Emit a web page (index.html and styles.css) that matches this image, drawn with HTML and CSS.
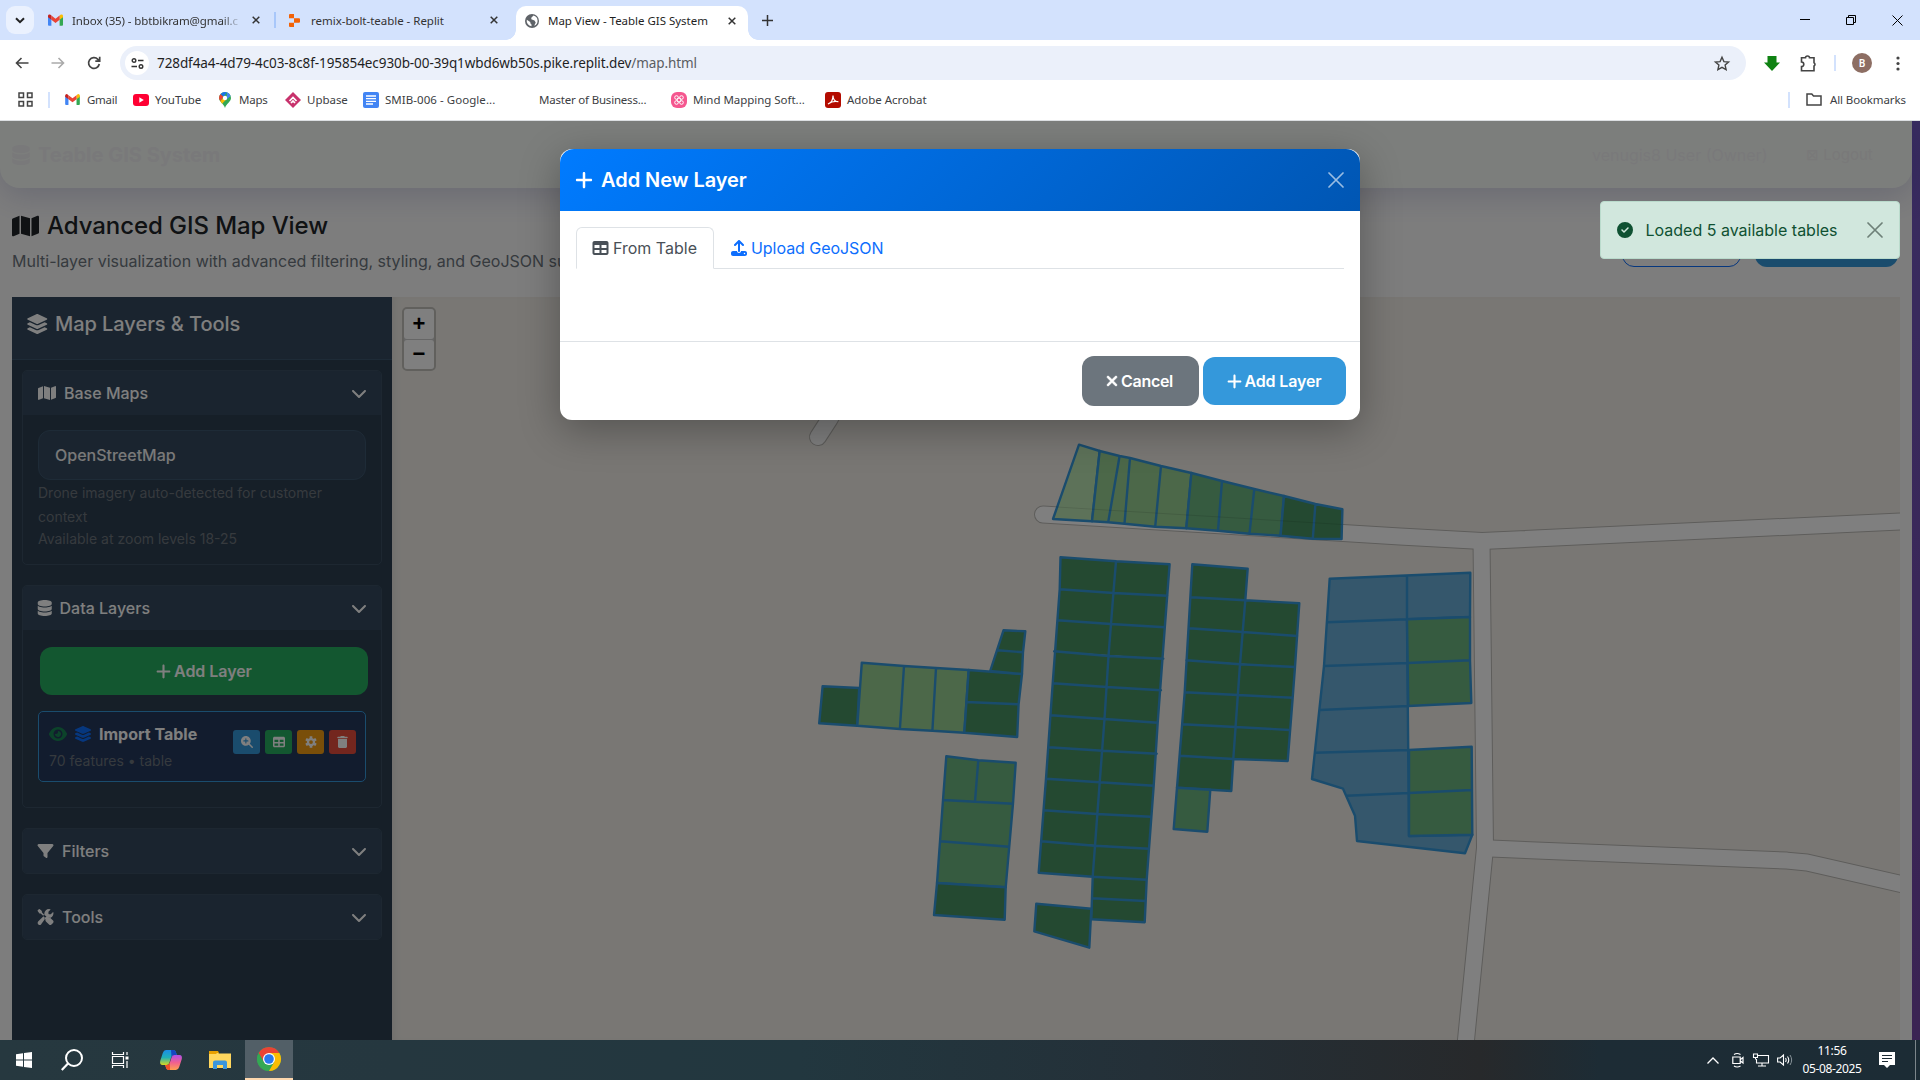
FILE: index.html
```html
<!DOCTYPE html>
<html lang="en">
<head>
<meta charset="utf-8">
<title>Map View - Teable GIS System</title>
<link rel="stylesheet" href="styles.css">
</head>
<body>
<svg class="sprite" aria-hidden="true">
  <symbol id="map" viewBox="0 0 576 512"><path d="M384 476.1L192 421.2V35.9L384 90.8V476.1zm32-1.2V88.4L543.1 37.5c15.8-6.3 32.9 5.3 32.9 22.3V394.6c0 9.8-6 18.6-15.1 22.3L416 474.8zM15.1 95.1L160 37.2V423.6L32.9 474.5C17.1 480.8 0 469.2 0 452.2V117.4c0-9.8 6-18.6 15.1-22.3z"/></symbol>
  <symbol id="layers" viewBox="0 0 576 512"><path d="M264.5 5.2c14.9-6.9 32.1-6.9 47 0l218.6 101c8.5 3.9 13.9 12.4 13.9 21.8s-5.4 17.9-13.9 21.8l-218.6 101c-14.9 6.9-32.1 6.9-47 0L45.9 149.8C37.4 145.8 32 137.3 32 128s5.4-17.9 13.9-21.8L264.5 5.2zM476.9 209.6l53.2 24.6c8.5 3.9 13.9 12.4 13.9 21.8s-5.4 17.9-13.9 21.8l-218.6 101c-14.9 6.9-32.1 6.9-47 0L45.9 277.8C37.4 273.8 32 265.3 32 256s5.4-17.9 13.9-21.8l53.2-24.6 152 70.2c23.4 10.8 50.4 10.8 73.8 0l152-70.2zm-152 198.2l152-70.2 53.2 24.6c8.5 3.9 13.9 12.4 13.9 21.8s-5.4 17.9-13.9 21.8l-218.6 101c-14.9 6.9-32.1 6.9-47 0L45.9 405.8C37.4 401.8 32 393.3 32 384s5.4-17.9 13.9-21.8l53.2-24.6 152 70.2c23.4 10.8 50.4 10.8 73.8 0z"/></symbol>
  <symbol id="plus" viewBox="0 0 448 512"><path d="M256 80c0-17.7-14.3-32-32-32s-32 14.3-32 32V224H48c-17.7 0-32 14.3-32 32s14.3 32 32 32H192V432c0 17.7 14.3 32 32 32s32-14.3 32-32V288H400c17.7 0 32-14.3 32-32s-14.3-32-32-32H256V80z"/></symbol>
  <symbol id="table" viewBox="0 0 512 512"><path d="M64 256V160H224v96H64zm0 64H224v96H64V320zm224 96V320H448v96H288zM448 256H288V160H448v96zM64 32C28.7 32 0 60.7 0 96V416c0 35.3 28.7 64 64 64H448c35.3 0 64-28.7 64-64V96c0-35.3-28.7-64-64-64H64z"/></symbol>
  <symbol id="upload" viewBox="0 0 512 512"><path d="M288 109.3V352c0 17.7-14.3 32-32 32s-32-14.3-32-32V109.3l-73.4 73.4c-12.5 12.5-32.8 12.5-45.3 0s-12.5-32.8 0-45.3l128-128c12.5-12.5 32.8-12.5 45.3 0l128 128c12.5 12.5 12.5 32.8 0 45.3s-32.8 12.5-45.3 0L288 109.3zM64 352H192c0 35.3 28.7 64 64 64s64-28.7 64-64H448c35.3 0 64 28.7 64 64v32c0 35.3-28.7 64-64 64H64c-35.3 0-64-28.7-64-64V416c0-35.3 28.7-64 64-64zM432 456a24 24 0 1 0 0-48 24 24 0 1 0 0 48z"/></symbol>
  <symbol id="database" viewBox="0 0 448 512"><path d="M448 80v48c0 44.2-100.3 80-224 80S0 172.2 0 128V80C0 35.8 100.3 0 224 0S448 35.8 448 80zM393.2 214.7c20.8-7.4 39.9-16.9 54.8-28.6V288c0 44.2-100.3 80-224 80S0 332.2 0 288V186.1c14.9 11.8 34 21.2 54.8 28.6C99.7 230.7 159.5 240 224 240s124.3-9.3 169.2-25.3zM0 346.1c14.9 11.8 34 21.2 54.8 28.6C99.7 390.7 159.5 400 224 400s124.3-9.3 169.2-25.3c20.8-7.4 39.9-16.9 54.8-28.6V432c0 44.2-100.3 80-224 80S0 476.2 0 432V346.1z"/></symbol>
  <symbol id="filter" viewBox="0 0 512 512"><path d="M3.9 54.9C10.5 40.9 24.5 32 40 32H472c15.5 0 29.5 8.9 36.1 22.9s4.6 30.5-5.2 42.5L320 320.9V448c0 12.1-6.8 23.2-17.7 28.6s-23.8 4.3-33.5-3l-64-48c-8.1-6-12.8-15.5-12.8-25.6V320.9L9 97.3C-.7 85.4-2.8 68.8 3.9 54.9z"/></symbol>
  <symbol id="tools" viewBox="0 0 512 512"><path d="M10 75L0 50 50 0 75 10 140 62V105L212 180 180 212 105 140H62z"/><path d="M330 255q45-5 75 24l92 92q33 37 0 78l-50 50q-40 33-78 0l-92-92q-32-34-22-80l-30-30 72-72z"/><path d="M20 400L190 232 228 268 225 335 112 492q-42 34-84 0t-8-92z"/><path d="M222 195q-18-80 40-145Q320-12 408 8q14 5 6 16L350 90v58q2 14 16 16h58l66-64q12-8 16 6 18 84-40 144-30 30-66 38-38-40-90-34z"/></symbol>
  <symbol id="down" viewBox="0 0 512 512"><path d="M233.4 406.6c12.5 12.5 32.8 12.5 45.3 0l192-192c12.5-12.5 12.5-32.8 0-45.3s-32.8-12.5-45.3 0L256 338.7 86.6 169.4c-12.5-12.5-32.8-12.5-45.3 0s-12.5 32.8 0 45.3l192 192z"/></symbol>
  <symbol id="xmark" viewBox="0 0 384 512"><path d="M342.6 150.6c12.5-12.5 12.5-32.8 0-45.3s-32.8-12.5-45.3 0L192 210.7 86.6 105.4c-12.5-12.5-32.8-12.5-45.3 0s-12.5 32.8 0 45.3L146.7 256 41.4 361.4c-12.5 12.5-12.5 32.8 0 45.3s32.8 12.5 45.3 0L192 301.3 297.4 406.6c12.5 12.5 32.8 12.5 45.3 0s12.5-32.8 0-45.3L237.3 256 342.6 150.6z"/></symbol>
  <symbol id="check" viewBox="0 0 512 512"><path d="M256 512A256 256 0 1 0 256 0a256 256 0 1 0 0 512zM369 209L241 337c-9.4 9.4-24.6 9.4-33.9 0l-64-64c-9.4-9.4-9.4-24.6 0-33.9s24.6-9.4 33.9 0l47 47L335 175c9.4-9.4 24.6-9.4 33.9 0s9.4 24.6 0 33.9z"/></symbol>
  <symbol id="eye" viewBox="0 0 576 512"><path d="M288 32c-80.8 0-145.5 36.8-192.6 80.6C48.6 156 17.3 208 2.5 243.7c-3.3 7.9-3.3 16.7 0 24.6C17.3 304 48.6 356 95.4 399.4C142.5 443.2 207.2 480 288 480s145.5-36.8 192.6-80.6c46.8-43.5 78.1-95.4 93-131.1c3.3-7.9 3.3-16.7 0-24.6c-14.9-35.7-46.2-87.7-93-131.1C433.5 68.8 368.8 32 288 32zM144 256a144 144 0 1 1 288 0 144 144 0 1 1-288 0zm144-64c0 35.3-28.7 64-64 64c-7.1 0-13.9-1.2-20.3-3.3c-5.5-1.8-11.9 1.6-11.7 7.4c.3 6.9 1.3 13.8 3.2 20.7c13.7 51.2 66.4 81.6 117.6 67.9s81.6-66.4 67.9-117.6c-11.1-41.5-47.8-69.4-88.6-71.1c-5.8-.2-9.2 6.1-7.4 11.7c2.1 6.4 3.3 13.2 3.3 20.3z"/></symbol>
  <symbol id="zoomin" viewBox="0 0 512 512"><path d="M416 208c0 45.9-14.9 88.3-40 122.7L502.6 457.4c12.5 12.5 12.5 32.8 0 45.3s-32.8 12.5-45.3 0L330.7 376c-34.4 25.2-76.8 40-122.7 40C93.1 416 0 322.9 0 208S93.1 0 208 0S416 93.1 416 208zM184 296c0 13.3 10.7 24 24 24s24-10.7 24-24V232h64c13.3 0 24-10.7 24-24s-10.7-24-24-24H232V120c0-13.3-10.7-24-24-24s-24 10.7-24 24v64H120c-13.3 0-24 10.7-24 24s10.7 24 24 24h64v64z"/></symbol>
  <symbol id="cog" viewBox="0 0 16 16"><circle cx="8" cy="8" r="4" fill="none" stroke="currentColor" stroke-width="3"/><path d="M8 0.3v3M8 12.7v3M1.3 4.15l2.6 1.5M12.1 10.35l2.6 1.5M1.3 11.85l2.6-1.5M12.1 5.65l2.6-1.5" stroke="currentColor" stroke-width="3.6" fill="none"/></symbol>
  <symbol id="trash" viewBox="0 0 448 512"><path d="M135.2 17.7C140.6 6.8 151.7 0 163.8 0H284.2c12.1 0 23.2 6.8 28.6 17.7L320 32h96c17.7 0 32 14.3 32 32s-14.3 32-32 32H32C14.3 96 0 81.7 0 64S14.3 32 32 32h96l7.2-14.3zM32 128H416V448c0 35.3-28.7 64-64 64H96c-35.3 0-64-28.7-64-64V128z"/></symbol>
  <symbol id="close" viewBox="0 0 16 16"><path d="M1 1L15 15M15 1L1 15" stroke="currentColor" stroke-width="1.7" stroke-linecap="round"/></symbol>
  <symbol id="tabx" viewBox="0 0 8 8"><path d="M.7 .7L7.3 7.3M7.3 .7L.7 7.3" stroke="#333" stroke-width="1.5"/></symbol>
  <symbol id="gmail" viewBox="0 0 16 12"><path d="M0 1.5V11a1 1 0 0 0 1 1h2.6V4.6z" fill="#4285f4"/><path d="M16 1.5V11a1 1 0 0 1-1 1h-2.6V4.6z" fill="#34a853"/><path d="M12.4 1.3V5.8L16 3V1.6A1.6 1.6 0 0 0 13.3.5z" fill="#fbbc04"/><path d="M3.6 1.3L8 4.7l4.4-3.4v4.5L8 9.1 3.6 5.8z" fill="#ea4335"/><path d="M0 1.6V3l3.6 2.8V1.3L2.7.5A1.6 1.6 0 0 0 0 1.6z" fill="#c5221f"/></symbol>
</svg>

<header class="tabs">
  <button class="tabsearch"><svg width="10" height="7" viewBox="0 0 10 7"><path d="M1 1.2l4 4 4-4" fill="none" stroke="#222" stroke-width="2"/></svg></button>
  <div class="tab first"><svg width="15" height="12"><use href="#gmail"/></svg><span class="fade">Inbox (35) - bbtbikram@gmail.c</span><svg class="x" width="8" height="8"><use href="#tabx"/></svg></div>
  <i class="bar"></i>
  <div class="tab second"><svg width="11" height="13" viewBox="0 0 11 13"><path d="M0 1a1 1 0 0 1 1-1h4v4.2H0zM5 4.2h5a1 1 0 0 1 1 1v2.6a1 1 0 0 1-1 1H5zM0 8.8h5V13H1a1 1 0 0 1-1-1z" fill="#f26207"/></svg><span>remix-bolt-teable - Replit</span><svg class="x" width="8" height="8"><use href="#tabx"/></svg></div>
  <div class="tab active"><svg width="14" height="14" viewBox="0 0 14 14"><circle cx="7" cy="7" r="7" fill="#5f6368"/><path d="M8.5 1.6L6.3 3.8v1.5l3.2 1.2 1.2 2-1.5 3.2A5.3 5.3 0 0 0 8.5 1.6zM1.8 5.8l3.4 2.3.3 1.5 1 .8v1.9a5.4 5.4 0 0 1-4.7-6.5z" fill="#fff"/></svg><span>Map View - Teable GIS System</span><svg class="x" width="8" height="8"><use href="#tabx"/></svg></div>
  <svg class="newtab" width="11" height="11" viewBox="0 0 11 11"><path d="M5.5 0v11M0 5.5h11" stroke="#333" stroke-width="1.5"/></svg>
  <div class="winctl">
    <svg width="10" height="12" viewBox="0 0 10 12"><path d="M0 5.5h10" stroke="#000"/></svg>
    <svg width="11" height="11" viewBox="0 0 11 11"><path d="M.5 2.5h7v7h-7zM2.5 2.5v-2h7v7h-2" fill="none" stroke="#000"/></svg>
    <svg width="11" height="11" viewBox="0 0 11 11"><path d="M.5 .5l10 10M10.500 .5l-10 10" stroke="#000"/></svg>
  </div>
</header>

<div class="toolbar">
  <svg class="nav" width="14" height="12" viewBox="0 0 14 12"><path d="M13.500 6H1.500M6.500 1L1.500 6l5 5" fill="none" stroke="#444" stroke-width="1.600"/></svg>
  <svg class="nav" width="14" height="12" viewBox="0 0 14 12"><path d="M.5 6h12M7.500 1l5 5-5 5" fill="none" stroke="#aaa" stroke-width="1.600"/></svg>
  <svg class="nav" width="14" height="14" viewBox="0 0 14 14"><path d="M12.300 8a5.400 5.400 0 1 1-1.400-4.700L12.500 5M12.700 .8v4.400H8.300" fill="none" stroke="#444" stroke-width="1.700"/></svg>
  <div class="omni">
    <span class="site"><svg width="13" height="11" viewBox="0 0 13 11"><path d="M7 2.500h5.500M.5 8.500H6" stroke="#333" stroke-width="1.500"/><circle cx="3" cy="2.500" r="1.800" fill="none" stroke="#333" stroke-width="1.400"/><circle cx="10" cy="8.500" r="1.800" fill="none" stroke="#333" stroke-width="1.400"/></svg></span>
    <span class="url">728df4a4-4d79-4c03-8c8f-195854ec930b-00-39q1wbd6wb50s.pike.replit.dev<em>/map.html</em></span>
    <svg class="star" width="16" height="15" viewBox="0 0 16 15"><path d="M8 1.300l1.900 4.300 4.700.4-3.500 3.100 1 4.600L8 11.300l-4.100 2.400 1-4.600L1.400 6l4.700-.4z" fill="none" stroke="#444" stroke-width="1.400"/></svg>
  </div>
  <svg class="dl" width="16" height="15" viewBox="0 0 16 15"><path d="M3.500 0h9v6.500H16L8 15 0 6.500h3.500z" fill="#0f8212"/></svg>
  <svg class="ext" width="17" height="17" viewBox="0 0 17 17"><path d="M1.500 2.800H5.500a2 1.800 0 0 1 4 0H14v5a1.800 1.800 0 0 1 0 3.200v4.800H1.500v-4.200a2.300 2.300 0 0 0 0-4.600z" fill="none" stroke="#444" stroke-width="1.600"/></svg>
  <i class="bar tall"></i>
  <span class="avatar">B</span>
  <svg class="dots" width="4" height="15" viewBox="0 0 4 15"><g fill="#444"><circle cx="2" cy="2" r="1.600"/><circle cx="2" cy="7.500" r="1.600"/><circle cx="2" cy="13" r="1.600"/></g></svg>
</div>

<nav class="marks">
  <svg class="apps" width="15" height="15" viewBox="0 0 15 15"><path d="M1 1h4.500v4.500H1zM9.500 1H14v4.500H9.500zM1 9.500h4.500V14H1zM9.500 9.500H14V14H9.500z" fill="none" stroke="#444" stroke-width="1.500"/></svg>
  <i class="bar tall"></i>
  <a class="m1"><svg width="15" height="11"><use href="#gmail"/></svg>Gmail</a>
  <a class="m2"><svg width="16" height="12" viewBox="0 0 16 12"><rect width="16" height="12" rx="3" fill="#f03"/><path d="M6.300 3.300v5.400L10.800 6z" fill="#fff"/></svg>YouTube</a>
  <a class="m3"><svg width="12" height="16" viewBox="0 0 12 16"><path d="M6 0a6 6 0 0 1 6 6c0 4-4.500 5-6 10C4.500 11 0 10 0 6a6 6 0 0 1 6-6z" fill="#34a853"/><path d="M0 6a6 6 0 0 1 1.600-4l3 2.800L1.300 9A6 6 0 0 1 0 6z" fill="#ea4335"/><path d="M1.600 2A6 6 0 0 1 8 .3L4.600 4.800z" fill="#1a73e8"/><path d="M8 .3A6 6 0 0 1 11.600 4L7.500 7.500z" fill="#4285f4"/><path d="M1.300 9l3.300-3.500 2.500 2-4 4.200z" fill="#fbbc04"/><circle cx="6" cy="6" r="2.200" fill="#fff"/></svg>Maps</a>
  <a class="m4"><svg width="16" height="16" viewBox="0 0 16 16"><path d="M8 0l8 8-8 8-8-8z" fill="#c8326c"/><path d="M4.500 9L8 5.500 11.500 9M6 11l2-2 2 2" fill="none" stroke="#fff" stroke-width="1.700"/></svg>Upbase</a>
  <a class="m5"><svg width="16" height="16" viewBox="0 0 16 16"><rect width="16" height="16" rx="2" fill="#4285f4"/><path d="M3 4h10M3 6.700h10M3 9.400h10M3 12h7" stroke="#fff" stroke-width="1.300"/></svg>SMIB-006 - Google...</a>
  <a class="m6">Master of Business...</a>
  <a class="m7"><svg width="16" height="16" viewBox="0 0 16 16"><rect width="16" height="16" rx="6" fill="#f5578f"/><g fill="none" stroke="#fff"><circle cx="8" cy="8" r="2"/><circle cx="5.500" cy="5.500" r="1.800"/><circle cx="10.500" cy="5.500" r="1.800"/><circle cx="5.500" cy="10.500" r="1.800"/><circle cx="10.500" cy="10.500" r="1.800"/></g></svg>Mind Mapping Soft...</a>
  <a class="m8"><svg width="16" height="16" viewBox="0 0 16 16"><rect width="16" height="16" rx="3" fill="#b30b00"/><path d="M3 12c3-1 5-4.500 5-8.500 0 4 2 6.500 5.300 6.200C9.500 9 6 10 3 12z" fill="none" stroke="#fff" stroke-width="1.200"/></svg>Adobe Acrobat</a>
  <i class="bar tall end"></i>
  <a class="m9"><svg width="16" height="13" viewBox="0 0 16 13"><path d="M1 1h4.800l1.700 2H15v9H1z" fill="none" stroke="#444" stroke-width="1.500"/></svg>All Bookmarks</a>
</nav>

<main class="page">
  <div class="app">
    <div class="navbar">
      <b><svg class="fa"><use href="#database"/></svg>Teable GIS System</b>
      <span class="user">venugis8 User (Owner)</span><span class="logout">⊠ Logout</span>
    </div>
    <section class="head">
      <div>
        <h1><svg width="27" height="24"><use href="#map"/></svg>Advanced GIS Map View</h1>
        <p>Multi-layer visualization with advanced filtering, styling, and GeoJSON support</p>
      </div>
      <div class="actions"><span class="outline"></span><span class="solid"></span></div>
    </section>
    <div class="work">
      <aside class="side">
        <h2><svg width="22.500" height="20"><use href="#layers"/></svg>Map Layers &amp; Tools</h2>
        <div class="panels">
          <section class="panel">
            <h3><svg width="20" height="16"><use href="#map"/></svg><span>Base Maps</span><svg class="chev" width="18" height="16"><use href="#down"/></svg></h3>
            <div class="pbody base">
              <div class="select">OpenStreetMap</div>
              <small>Drone imagery auto-detected for customer context</small>
              <small class="lv">Available at zoom levels 18-25</small>
            </div>
          </section>
          <section class="panel">
            <h3><svg width="15.500" height="16"><use href="#database"/></svg><span>Data Layers</span><svg class="chev" width="18" height="16"><use href="#down"/></svg></h3>
            <div class="pbody data">
              <button class="green"><svg width="15" height="17"><use href="#plus"/></svg>Add Layer</button>
              <div class="layer">
                <div class="info">
                  <div class="lname"><svg class="vis" width="18" height="16"><use href="#eye"/></svg><svg class="lay" width="18" height="16"><use href="#layers"/></svg>Import Table</div>
                  <small>70 features • table</small>
                </div>
                <div class="ops">
                  <span class="blue"><svg width="12" height="12"><use href="#zoomin"/></svg></span>
                  <span class="grn"><svg width="12" height="12"><use href="#table"/></svg></span>
                  <span class="org"><svg width="12" height="12"><use href="#cog"/></svg></span>
                  <span class="red"><svg width="11" height="12"><use href="#trash"/></svg></span>
                </div>
              </div>
            </div>
          </section>
          <section class="panel">
            <h3><svg width="17" height="16"><use href="#filter"/></svg><span class="wide">Filters</span><svg class="chev" width="18" height="16"><use href="#down"/></svg></h3>
          </section>
          <section class="panel">
            <h3><svg width="17" height="16"><use href="#tools"/></svg><span class="wide">Tools</span><svg class="chev" width="18" height="16"><use href="#down"/></svg></h3>
          </section>
        </div>
      </aside>
      <div class="map">
        <svg class="canvas" viewBox="392 297 1508 743" width="1508" height="743">
          <g class="casing">
            <path d="M818 437L829 420 850 383"/>
            <path d="M1043 514.500L1400 536.400 1482 541 1910 521"/>
            <path d="M1481.500 541L1485 848 1465 1050"/>
            <path d="M1485 848.300L1787 860.600 1807 862.500 1910 886"/>
          </g>
          <g class="road">
            <path d="M818 437L829 420 850 383"/>
            <path d="M1043 514.500L1400 536.400 1482 541 1910 521"/>
            <path d="M1481.500 541L1485 848 1465 1050"/>
            <path d="M1485 848.300L1787 860.600 1807 862.500 1910 886"/>
          </g>
          <g class="plots">
            <path class="a" d="M1079 444.700L1099.700 451 1092 521.300 1053 519z"/>
            <path class="b" d="M1099.700 451L1119.600 456 1130 458 1161 466 1191.400 473 1186.300 528.300 1155.200 526.700 1124.500 523.700 1108.200 522.300 1092 521.300zM1119.600 456L1108.200 522.300M1130 458L1124.500 523.700M1161 466L1155.200 526.700"/>
            <path class="c" d="M1191.400 473L1222 481 1254.300 489 1284 496 1280.600 535.700 1249.500 533.700 1218 530.700 1186.300 528.300zM1222 481L1218 530.700M1254.300 489L1249.500 533.700"/>
            <path class="d" d="M1284 496L1315.400 504 1342.400 509.300 1341.600 539 1312.800 538.700 1280.600 535.700zM1315.400 504L1312.800 538.700"/>
            <path class="seam" d="M1057 507L1342 524.500"/>

            <path class="d" d="M822.600 686.300L859.200 688 857.300 725.700 819.200 723.300z"/>
            <path class="b" d="M861.800 662.700L904 666 936 668 968.700 670 964.300 732.700 932.400 730.700 899.900 729 857.300 725.700zM904 666L899.900 729M936 668L932.400 730.700"/>
            <path class="d" d="M968.700 670L1022 674 1018.600 704.300 1017.200 737 964.300 732.700zM966.500 702L1018.600 704.300"/>
            <path class="d" d="M1003.500 630.300L1025.300 631.300 1023 652.300 1022 674 990.200 671zM997.600 650.300L1023 652.300"/>

            <path class="d" d="M1060.500 557.300L1116 561.300 1169.600 564.300 1164.800 627.300 1157.700 722.700 1153.700 785.700 1146.700 879.700 1144.700 922.300 1091.300 919.300 1092.700 876.700 1038.700 872.700 1046 778.700 1052.700 683.300 1059.700 589.300zM1116 561.300L1113.400 593 1108.500 656 1104.500 719 1099.700 782.300 1092.700 876.700M1059.700 589.300L1113.400 593 1167.400 595.700M1057.500 620.300L1110.800 624 1164.800 627.300M1054.200 651.300L1108.500 656 1163.300 658.700M1052.700 683.300L1106.700 687 1161 690.300M1050.800 715.300L1104.500 719 1157.700 722.700M1049 747.300L1102.700 750.700 1156.700 753.700M1046 778.700L1099.700 782.300 1153.700 785.700M1043.700 810.300L1097 814 1150.700 816.700M1041.300 841.300L1094.700 845.700 1149 848.700M1092.700 876.700L1146.700 879.700M1092 898.300L1145.300 901"/>
            <path class="d" d="M1036.300 903.700L1091.300 908.700 1089.300 947.700 1034.300 931.300z"/>

            <path class="c" d="M946.300 756.300L978.300 760.300 1015.700 762.700 1013 803.700 1005.700 887.300 937 883 943 800zM978.300 760.300L975 801.300M943 800L1013 803.700M940.700 841.300L1009 846.700"/>
            <path class="d" d="M937 883L1005.700 887.300 1004.700 919.700 934 915z"/>

            <path class="d" d="M1192.300 564.300L1247.700 568.700 1245.300 600.300 1299.300 603.300 1295 667 1292.700 697.700 1287.700 761 1233.300 759 1231.300 791 1177 787.700 1184.700 692.300zM1245.300 600.300L1240 664.300 1233.300 759M1191.300 597.300L1245.300 600.300M1189.300 628.300L1242.700 632 1297.300 636M1186.300 660.300L1240 664.300 1295 667M1184.700 692.300L1238 695 1292.700 697.700M1182.300 724.300L1235.700 727 1289.300 730M1180 755.700L1233.300 759"/>
            <path class="c" d="M1177 787.700L1210.300 789.700 1207.300 831.700 1173.700 829z"/>

            <path class="e" d="M1329.700 578.700L1470.300 572.700 1470 617 1407 619.300 1409 836 1472.300 834.700 1465 853.300 1357 841 1355 815.700 1343 788.700 1312 779 1324 666zM1407 575.700V619.300M1327.300 622.300L1407 619.300M1324 666L1408 663M1320.300 710L1408.300 706M1315 752.700L1409 750M1346.700 795.700L1409 793"/>
            <path class="c" d="M1407 619.300L1470 617 1470 660.300 1471.300 703 1408.300 706zM1408 663L1470 660.300M1409 750L1471.700 746.700 1472.300 834.700 1409 836zM1409 793L1472 790"/>
          </g>
        </svg>
        <div class="zoomctl"><span>+</span><span>−</span></div>
      </div>
    </div>
  </div>

  <div class="backdrop">
    <div class="modal">
      <div class="mhead"><svg width="18" height="20"><use href="#plus"/></svg><span>Add New Layer</span><svg class="mx" width="16" height="16"><use href="#close"/></svg></div>
      <div class="mbody">
        <div class="mtabs">
          <span class="on"><svg width="17" height="16"><use href="#table"/></svg>From Table</span>
          <span class="off"><svg width="16" height="16"><use href="#upload"/></svg>Upload GeoJSON</span>
        </div>
      </div>
      <div class="mfoot">
        <button class="cancel"><svg class="heavy" width="12" height="16"><use href="#xmark"/></svg>Cancel</button>
        <button class="add"><svg width="15" height="17"><use href="#plus"/></svg>Add Layer</button>
      </div>
    </div>
  </div>
  <div class="toast"><svg width="16" height="16"><use href="#check"/></svg><span>Loaded 5 available tables</span><svg class="tx" width="16" height="16"><use href="#close"/></svg></div>
</main>

<footer class="taskbar">
  <span class="tb start"><svg width="16" height="16" viewBox="0 0 16 16"><path d="M0 2.200L7 1.200V7.500H0zM8 1L16 0V7.500H8zM0 8.500H7V14.800L0 13.800zM8 8.500H16V16L8 15z" fill="#fff"/></svg></span>
  <span class="tb"><svg width="22" height="22" viewBox="0 0 22 22"><circle cx="13" cy="9" r="8" fill="none" stroke="#fff" stroke-width="2"/><path d="M7 14.500L.8 21" stroke="#fff" stroke-width="2.200"/></svg></span>
  <span class="tb"><svg width="17" height="16" viewBox="0 0 17 16"><path d="M.5 0v2.500h11V0M.5 4.500h11v7H.5zM.5 16v-2.500h11V16M15 0v3M15 9v7" fill="none" stroke="#fff" stroke-width="1.200"/><path d="M13.500 4.500h3V7.500h-3z" fill="#fff"/></svg></span>
  <span class="tb"><svg width="22" height="20" viewBox="0 0 22 20"><defs><linearGradient id="g1" x1="0" y1="0" x2="0" y2="1"><stop offset="0" stop-color="#1b8de8"/><stop offset=".5" stop-color="#20b0b8"/><stop offset="1" stop-color="#d8d820"/></linearGradient><linearGradient id="g2" x1="0" y1="0" x2="0" y2="1"><stop offset="0" stop-color="#b050e8"/><stop offset=".5" stop-color="#f06090"/><stop offset="1" stop-color="#ffa050"/></linearGradient></defs><path d="M6 0h7q2.500 0 3.200 3l.6 2h-3q-2 0-2.700 2.500L9.300 13q-.7 2-2.800 2H2.500Q-.5 15 .2 11L2.800 3Q3.700 0 6 0z" fill="url(#g1)"/><path d="M11 0h2.500q2 0 2.700 3l.6 2h-3q-1.500 0-2.300 2z" fill="#1746c0"/><path d="M16 20H9q-2.500 0-3.200-3l-.6-2h2q2 0 2.700-2.500L11.700 7q.7-2 2.800-2h5q3 0 2.300 4l-2.600 8q-.9 3-3.200 3z" fill="url(#g2)"/><path d="M10 20H9q-2.500 0-3.200-3l-.6-2h2q2 0 2.700-2.500z" fill="#f05028"/></svg></span>
  <span class="tb"><svg width="22" height="18" viewBox="0 0 22 18"><path d="M0 1h8l2 1.500h12V17H0z" fill="#ffd75e"/><path d="M0 0h9l1 2H8L7 3H0z" fill="#e8a000"/><path d="M4 18v-6.500a2 2 0 0 1 2-2h10a2 2 0 0 1 2 2V18h-4v-4H8v4z" fill="#3a96dd"/></svg></span>
  <span class="tb cur"><svg width="24" height="24" viewBox="0 0 24 24"><circle cx="12" cy="12" r="12" fill="#34a853"/><path d="M12 12L1.600 6A12 12 0 0 1 22.400 6z" fill="#ea4335"/><path d="M22.400 6A12 12 0 0 1 12 24L17.200 15 12 6z" fill="#fbbc04"/><path d="M1.600 6L6.800 15 12 12V6z" fill="#ea4335"/><path d="M1.600 6L6.800 15 12 18 11 23.900A12 12 0 0 1 1.600 6z" fill="#34a853"/><circle cx="12" cy="12" r="6" fill="#fff"/><circle cx="12" cy="12" r="4.800" fill="#2a78ee"/></svg></span>
  <div class="tray">
    <svg width="12" height="7" viewBox="0 0 12 7"><path d="M.5 6.500L6 1l5.500 5.500" fill="none" stroke="#fff" stroke-width="1.300"/></svg>
    <svg class="t2" width="12" height="16" viewBox="0 0 12 16"><path d="M.8 5h7.400v6.500H.8zM8.500 7.500l2.500-2v5.500l-2.500-2M2 2.500q3-2 6.500 0M2 14q3 2 6.500 0" fill="none" stroke="#fff" stroke-width="1.200"/></svg>
    <svg class="t3" width="16" height="14" viewBox="0 0 16 14"><path d="M5 2.500h10.500v7.500H3.500V6M5 13h8M9 10v3M.5 1h4v3.500H.5zM2.500 4.500v2" fill="none" stroke="#fff" stroke-width="1.100"/></svg>
    <svg class="t4" width="16" height="14" viewBox="0 0 16 14"><path d="M.6 5h2.500L6.500 2v10L3.100 9H.6zM8.500 5q1.300 2 0 4M10.500 3.500q2.500 3.500 0 7" fill="none" stroke="#fff" stroke-width="1.100"/><path d="M13 2q3.300 5 0 10" fill="none" stroke="#89949a"/></svg>
    <div class="clock"><span>11:56</span><span>05-08-2025</span></div>
    <svg class="t5" width="16" height="16" viewBox="0 0 16 16"><path d="M0 0h16v13h-5l-3 3-3-3H0z" fill="#fff"/><path d="M3 3.500h10M3 6.500h10M3 9.500h6" stroke="#1c2b34"/></svg>
    <i class="desk"></i>
  </div>
</footer>
</body>
</html>
```
FILE: styles.css
```css
* { box-sizing: border-box; }
body { margin: 0; width: 1920px; height: 1080px; overflow: hidden; display: flex; flex-direction: column; font-family: Inter, sans-serif; font-size: 16px; }
svg { flex: none; fill: currentColor; overflow: visible; }
.sprite { position: absolute; width: 0; height: 0; }
button { border: 0; font: inherit; padding: 0; }
h1, h2, h3 { margin: 0; font-weight: 500; }
p { margin: 0; }

/* browser chrome */
.tabs, .toolbar, .marks, .taskbar { font-family: "Noto Sans", sans-serif; white-space: nowrap; flex: none; }
.tabs { height: 40px; background: #d3e2fd; display: flex; align-items: center; font-size: 11.5px; letter-spacing: -.02px; color: #333; }
.tabsearch { margin-left: 6px; width: 28px; height: 28px; border-radius: 9px; background: #eaf1fe; display: grid; place-items: center; }
.tab { display: flex; align-items: center; }
.tab .x { margin-left: auto; }
.first { width: 212px; margin-left: 14px; gap: 9px; }
.fade { width: 172px; letter-spacing: -.1px; mask-image: linear-gradient(90deg, #000 88%, rgba(0,0,0,.1) 98%); }
.bar { width: 2px; height: 16px; background: #a8c7fa; flex: none; }
.first + .bar { margin-left: 14px; }
.second { width: 209px; margin-left: 13px; gap: 11px; }
.active { align-self: flex-end; height: 34px; width: 232px; margin-left: 18px; padding: 0 12px 5px 9px; gap: 9px; background: #fff; border-radius: 10px 10px 0 0; color: #1f1f1f; position: relative; }
.active::before, .active::after { content: ""; position: absolute; bottom: 0; width: 10px; height: 10px; }
.active::before { left: -10px; background: radial-gradient(circle at 0 0, transparent 9.5px, #fff 10px); }
.active::after { right: -10px; background: radial-gradient(circle at 100% 0, transparent 9.5px, #fff 10px); }
.newtab { margin-left: 14px; }
.winctl { margin-left: auto; margin-right: 17px; display: flex; gap: 35.500px; align-items: center; }
.toolbar { height: 46px; display: flex; align-items: center; background: #fff; padding-left: 15px; }
.nav { margin-right: 22px; }
.nav:nth-child(3) { margin-right: 19px; }
.omni { width: 1626px; height: 34px; border-radius: 17px; background: #ebf0fa; display: flex; align-items: center; padding: 0 16px 0 5px; }
.site { width: 24px; height: 24px; border-radius: 50%; background: #fff; display: grid; place-items: center; }
.url { margin-left: 8px; font-size: 13.500px; letter-spacing: -.09px; color: #1f1f1f; }
.url em { font-style: normal; color: #5a5d62; }
.star { margin-left: auto; }
.dl { margin-left: 18px; }
.ext { margin-left: 20px; }
.tall { background: #d3e2fd; }
.toolbar .tall { margin-left: 17px; }
.avatar { margin-left: 16px; width: 20px; height: 20px; border-radius: 50%; background: #8d6e63; color: #fff; font-size: 10px; font-weight: 600; display: grid; place-items: center; }
.dots { margin-left: 24px; }
.marks { height: 35px; border-bottom: 1px solid #dcdfe2; background: #fff; display: flex; align-items: center; padding: 0 13px 7px 18px; font-size: 11.500px; letter-spacing: -.03px; color: #3c4043; }
.marks a { display: flex; align-items: center; }
.marks .apps + .tall { margin-left: 15px; margin-right: 15px; }
.m1 { width: 68px; gap: 7px; letter-spacing: -.25px; }
.m2 { width: 86px; gap: 6px; }
.m3 { width: 66px; gap: 8px; letter-spacing: -.2px; }
.m4 { width: 78px; gap: 6px; }
.m5 { width: 176px; gap: 6px; letter-spacing: .05px; }
.m6 { width: 132px; letter-spacing: -.2px; }
.m7 { width: 154px; gap: 6px; }
.m8 { width: 140px; gap: 6px; }
.marks .end { margin-left: auto; margin-right: 16px; }
.m9 { gap: 8px; width: 101px; letter-spacing: -.12px; }

/* application */
.page { flex: 1; position: relative; overflow: hidden; background: linear-gradient(#7258c0, #7646a6); min-height: 0; }
.app { width: 1912px; height: 100%; background: #fbfbfb; display: flex; flex-direction: column; }
.navbar { height: 67px; flex: none; background: #f9fcf9; border-radius: 0 0 20px 20px; box-shadow: 0 8px 32px rgba(31,38,135,.18); display: flex; align-items: center; padding-left: 12px; color: #f2f2f4; position: relative; }
.navbar b { font-size: 20px; font-weight: 700; display: flex; gap: 8px; align-items: center; width: 1580px; }
.navbar .fa { width: 18px; height: 20px; }
.user { width: 214px; color: #f3f3f5; }
.logout { color: #f2f2f2; font-size: 15px; }
.head { height: 109px; flex: none; display: flex; justify-content: space-between; padding: 23px 14px 0 12px; }
.head h1 { font-size: 24px; line-height: 29px; display: flex; gap: 8px; align-items: center; color: #212529; letter-spacing: -.07px; }
.head p { margin-top: 9px; line-height: 24px; color: #6c757d; }
.actions { display: flex; gap: 14px; padding-top: 8px; }
.outline, .solid { height: 48px; border-radius: 12px; }
.outline { width: 119px; border: 1px solid #0d6efd; }
.solid { width: 143px; background: #3498db; }
.work { flex: 1; display: flex; padding: 0 12px; min-height: 0; }
.side { width: 380px; background: #2c3e50; color: #fff; }
.side h2 { height: 63px; background: #34495e; border-bottom: 1px solid #3d566e; font-size: 20px; letter-spacing: -.05px; display: flex; align-items: center; gap: 6.500px; padding: 0 0 8px 14px; }
.panels { padding: 10px; display: flex; flex-direction: column; gap: 20px; }
.panel { border: 1px solid #3a4f63; border-radius: 5px; overflow: hidden; }
.panel h3 { height: 44px; background: #34495e; display: flex; align-items: center; gap: 7px; padding: 0 13px 0 14px; font-size: 16px; }
.wide { margin-left: 1px; }
.chev { margin-left: auto; }
.pbody { padding: 15px 15px 0; }
.base { height: 149px; }
.select { height: 50px; border: 1px solid #3d566e; border-radius: 12px; background: #34495e; display: flex; align-items: center; padding-left: 16px; font-weight: 500; color: #f2f2f2; }
small { display: block; font-size: 14px; line-height: 24px; color: #6c757d; }
.base small { margin-top: 1px; }
.base .lv { margin-top: -2px; }
.data { height: 177px; padding-top: 17px; }
.green { width: 328px; height: 48px; margin-left: 2px; border-radius: 12px; background: #27ae60; color: #fff; font-weight: 600; display: flex; justify-content: center; align-items: center; gap: 3px; letter-spacing: -.05px; }
.layer { margin-top: 16px; height: 71px; border: 1px solid #3498db; border-radius: 5px; background: #24385c; display: flex; justify-content: space-between; padding: 10px 9px 0 10px; }
.lname { display: flex; align-items: center; height: 24px; font-weight: 700; }
.vis { color: #198754; margin-right: 7px; }
.lay { color: #0d6efd; margin-right: 7px; }
.info small { margin-top: 3px; }
.ops { display: flex; gap: 5px; padding-top: 8px; }
.ops span { width: 27px; height: 24px; border-radius: 3px; display: grid; place-items: center; }
.blue { background: #3498db; } .grn { background: #27ae60; } .org { background: #f39c12; } .red { background: #e74c3c; }
.map { flex: 1; background: #f2efe9; position: relative; overflow: hidden; box-shadow: inset 6px 0 8px -4px rgba(0,0,0,.08); }
.canvas { display: block; }
.canvas path { stroke-linecap: round; stroke-linejoin: round; }
.casing path { fill: none; stroke: #bcbab6; stroke-width: 18px; }
.road path { fill: none; stroke: #fff; stroke-width: 16px; }
.plots path { stroke: #3498db; stroke-width: 2.4px; }
.plots .a { fill: #bbe5b3; } .plots .b { fill: #98d093; } .plots .c { fill: #6cb680; } .plots .d { fill: #489362; } .plots .e { fill: #6aaed8; }
.plots .seam { fill: none; stroke: rgba(0,0,0,.1); stroke-width: 1px; }
.zoomctl { position: absolute; left: 10px; top: 10px; width: 34px; border: 2px solid #c2c0bb; border-radius: 5px; background: #ccc; display: grid; gap: 1px; }
.zoomctl span { height: 29.500px; background: #fff; border-radius: 3px; display: grid; place-items: center; font: bold 22px/1 "Liberation Sans", sans-serif; }

/* overlays */
.backdrop { position: absolute; inset: 0; background: rgba(0,0,0,.5); display: flex; justify-content: center; align-items: flex-start; padding-top: 28px; }
.modal { width: 800px; height: 271px; border-radius: 12px; background: #fff; box-shadow: 0 10px 40px rgba(0,0,0,.3); display: flex; flex-direction: column; }
.mhead { height: 62px; border-radius: 14px 14px 0 0; background: linear-gradient(135deg, #007bff, #0056b3); color: #fff; font-size: 20px; font-weight: 600; display: flex; align-items: center; gap: 8px; padding: 0 16px 0 15px; letter-spacing: -.05px; }
.mx { margin-left: auto; opacity: .6; }
.mbody { height: 131px; padding: 16px 16px 0; border-bottom: 1px solid #dee2e6; }
.mtabs { display: flex; border-bottom: 1px solid #dee2e6; height: 42px; }
.mtabs span { display: flex; align-items: center; gap: 4px; padding: 0 17px; }
.mtabs .on { width: 138px; height: 42px; border: 1px solid #dee2e6; border-bottom-color: #fff; border-radius: 6px 6px 0 0; color: #495057; padding: 0 15px; }
.mtabs .off { color: #0d6efd; letter-spacing: -.05px; }
.mfoot { flex: 1; display: flex; justify-content: flex-end; align-items: center; gap: 4px; padding: 0 14px 0 0; }
.mfoot button { border-radius: 12px; color: #fff; font-weight: 600; display: flex; align-items: center; justify-content: center; gap: 3px; }
.cancel { width: 117px; height: 50px; background: #6c757d; letter-spacing: -.3px; padding-right: 2px; }
.heavy { stroke: currentColor; stroke-width: 20px; }
.add { width: 143px; height: 48px; background: #3498db; letter-spacing: -.15px; padding-right: 1px; }
.toast { position: absolute; left: 1600px; top: 80px; width: 300px; height: 58px; background: #d1e7dd; border: 1px solid #badbcc; border-radius: 4px; color: #0f5132; display: flex; align-items: center; padding: 0 16px; gap: 12.500px; }
.tx { margin-left: auto; color: #6e8078; }

/* taskbar */
.taskbar { height: 40px; background: linear-gradient(90deg, #26383f 0, #25373f 400px, #22373f 800px, #243038 1150px, #27292b 1480px, #1d2c35 1600px, #1c2c35); display: flex; color: #fff; }
.tb { width: 49px; display: grid; place-items: center; }
.start { width: 48px; }
.cur { width: 48px; background: #525f67; border-bottom: 2px solid #ffd8ae; }
.tb:nth-child(4) { width: 51px; }
.tb:nth-child(5) { padding-right: 2px; }
.tb:nth-child(2) { width: 48px; }
.tray { margin-left: auto; display: flex; align-items: center; margin-right: 4px; }
.t2 { margin-left: 13px; } .t3 { margin-left: 9px; } .t4 { margin-left: 8px; } .t5 { margin-left: 13px; }
.clock { width: 68px; margin-left: 5px; display: grid; text-align: center; font-size: 12px; line-height: 18px; letter-spacing: -.35px; }
.desk { width: 1px; height: 40px; background: #7c868b; margin-left: 20px; }
```
